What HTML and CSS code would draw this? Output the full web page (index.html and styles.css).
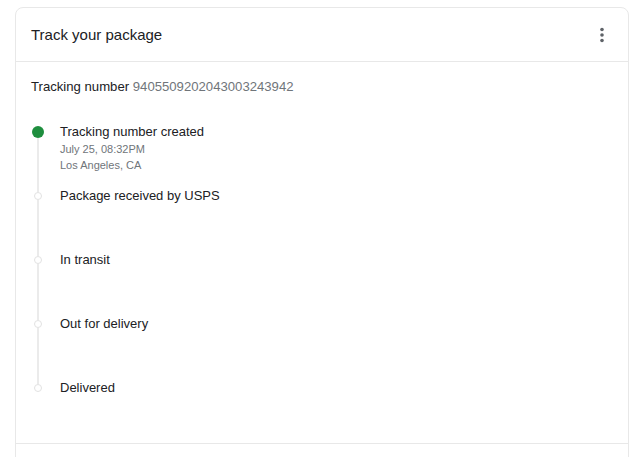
FILE: index.html
```html
<!DOCTYPE html>
<html>
<head>
<meta charset="utf-8">
<link rel="stylesheet" href="styles.css">
</head>
<body>
<div class="card">
  <div class="card-header">
    <div class="title">Track your package</div>
    <button class="menu" aria-label="More options">
      <svg width="20" height="20" viewBox="0 0 20 20"><circle cx="10" cy="4.5" r="1.8"/><circle cx="10" cy="10" r="1.8"/><circle cx="10" cy="15.5" r="1.8"/></svg>
    </button>
  </div>
  <div class="card-body">
    <div class="tracking">Tracking number <span class="num">9405509202043003243942</span></div>
    <ol class="timeline">
      <li class="step done first">
        <div class="marker"><span class="seg top"></span><span class="dot"></span><span class="seg bottom"></span></div>
        <div class="content">
          <div class="step-title">Tracking number created</div>
          <div class="details">
            <div class="sub">July 25, 08:32PM</div>
            <div class="sub">Los Angeles, CA</div>
          </div>
        </div>
      </li>
      <li class="step">
        <div class="marker"><span class="seg top"></span><span class="dot"></span><span class="seg bottom"></span></div>
        <div class="content"><div class="step-title">Package received by USPS</div></div>
      </li>
      <li class="step">
        <div class="marker"><span class="seg top"></span><span class="dot"></span><span class="seg bottom"></span></div>
        <div class="content"><div class="step-title">In transit</div></div>
      </li>
      <li class="step">
        <div class="marker"><span class="seg top"></span><span class="dot"></span><span class="seg bottom"></span></div>
        <div class="content"><div class="step-title">Out for delivery</div></div>
      </li>
      <li class="step last">
        <div class="marker"><span class="seg top"></span><span class="dot"></span><span class="seg bottom"></span></div>
        <div class="content"><div class="step-title">Delivered</div></div>
      </li>
    </ol>
  </div>
  <div class="card-footer"></div>
</div>
</body>
</html>
```
FILE: styles.css
```css
* { box-sizing: border-box; }
html, body { margin: 0; padding: 0; background: #fff; }
body {
  font-family: "Liberation Sans", Arial, Helvetica, sans-serif;
  color: #202124;
  padding: 7px 11px 0 15px;
}
.card {
  border: 1px solid #e8e8e8;
  border-radius: 8px 8px 0 0;
  width: 614px;
  min-height: 460px;
}
.card-header {
  height: 54px;
  border-bottom: 1px solid #e8e8e8;
  display: flex;
  align-items: center;
  justify-content: space-between;
  padding: 0 16px 0 15px;
}
.title { font-size: 15px; line-height: 20px; }
.menu {
  border: 0; background: none; padding: 0; width: 20px; height: 20px;
  display: flex; fill: #5f6368;
}
.card-body {
  padding: 16px 15px 0 15px;
  border-bottom: 1px solid #e8e8e8;
}
.tracking { font-size: 13.15px; line-height: 17px; }
.num { color: #70757a; }
.timeline {
  list-style: none;
  margin: 28px 0 0 0;
  padding: 0;
}
.step {
  display: flex;
  height: 64px;
  gap: 16px;
}
.marker {
  width: 13px;
  display: flex;
  flex-direction: column;
  align-items: center;
}
.seg { width: 2px; background: #ebebeb; }
.seg.top { height: 5px; }
.seg.bottom { flex: 1; }
.first .seg.top, .last .seg.bottom { background: transparent; }
.dot {
  width: 8px; height: 8px; border-radius: 50%;
  border: 1.5px solid #e2e2e2; background: #fff; flex: none;
}
.done .seg.top { height: 3px; }
.done .dot {
  width: 12px; height: 12px; border: 0; background: #1e8e3e;
}
.step-title { font-size: 13px; line-height: 18px; }
.sub { font-size: 11px; line-height: 16px; color: #70757a; }
```
